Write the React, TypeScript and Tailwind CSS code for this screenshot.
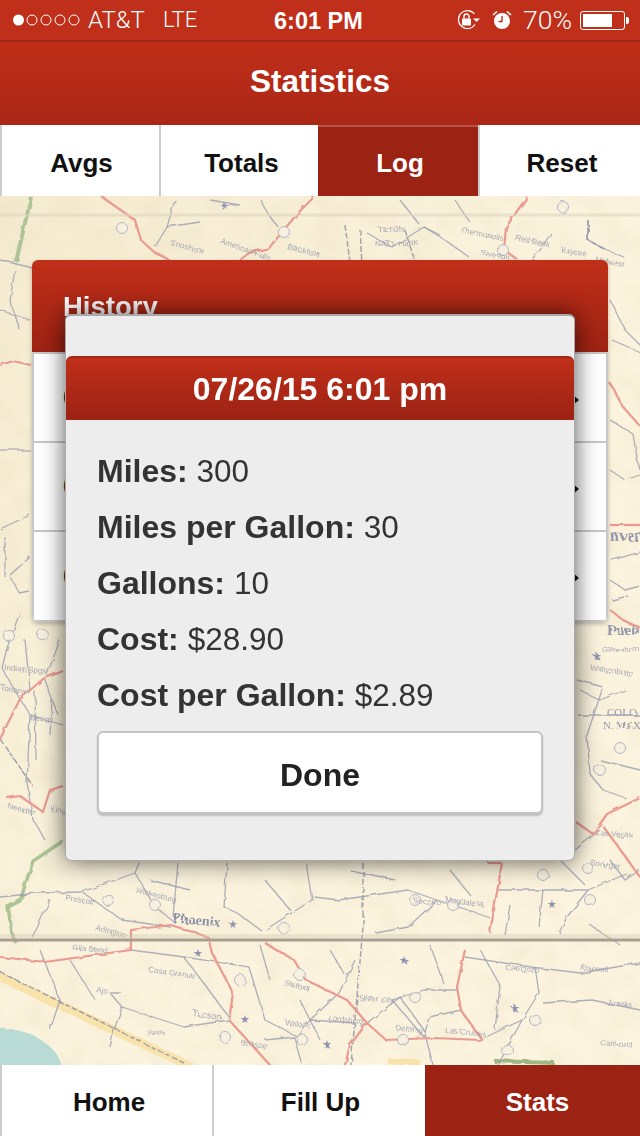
const sans = "font-['Liberation_Sans',Arial,sans-serif]";

const greyRoads = [
  "0,260 33,268", "175,200 167,227 155,247", "261,200 268,214 278,227", "367,233 392,247 424,227 445,240 469,257",
  "588,220 588,240 606,250 624,257", "551,233 540,250 531,260", "424,227 440,235", "200,222 167,227", "0,450 30,450",
  "0,529 30,515", "5,537 5,577", "10,575 30,557", "10,577 20,594 30,592", "20,612 7,648 2,668 20,699 30,715 27,782 33,820 45,840",
  "30,715 63,725", "35,690 36,760", "52,700 50,735", "603,687 587,735 590,774 603,790 626,798", "577,680 603,687",
  "610,420 633,434 637,458 640,470", "610,470 625,480 640,475", "610,580 625,590 640,586", "578,715 640,715",
  "600,760 640,770", "0,897 37,893 82,892 135,873 139,863", "82,892 122,920 171,927", "135,873 155,907 176,923",
  "178,863 173,917", "227,863 224,907 237,913 261,930", "306,863 312,900 265,930", "314,897 339,900 408,890 437,900 490,917",
  "437,900 408,927 376,933", "498,890 543,890 588,890 629,873", "543,890 539,927", "588,890 567,917 559,933",
  "465,957 531,967 580,973 640,963", "457,990 424,990 392,1000 424,1037", "461,1010 429,1017 424,1037",
  "486,1037 522,1020 539,993 535,967", "543,1003 592,1000 640,1010", "522,1020 498,1065", "122,993 110,993 122,1007 114,1030 110,1047",
  "122,1007 184,1027 229,1020", "184,957 229,1017", "249,967 265,1020 298,1037 310,1020 355,1023", "310,1020 339,993 355,960",
  "265,1040 294,1037 302,1065", "367,1023 400,997 424,1030 433,1065", "131,950 184,957 249,967", "50,900 36,930 30,940",
  "560,860 585,885", "610,860 625,880 640,870", "575,850 600,830", "15,270 10,300 20,330", "0,310 30,320", "610,300 625,330 640,345",
  "612,340 640,352", "612,560 640,552", "612,600 628,596", "580,690 600,700 625,690", "25,640 30,690", "60,640 45,680 58,715",
  "210,200 240,205", "400,200 420,225", "455,200 470,222", "260,945 270,980", "480,950 500,985 495,1030", "330,950 345,975",
  "40,950 60,1000 50,1030", "70,960 95,1000", "150,880 190,890", "265,880 290,910", "350,870 395,880", "450,870 470,895",
  "510,905 505,935", "590,925 620,945", "430,945 445,985", "300,1000 320,1040",
];
const darkRoads = ["363,863 363,927 351,1065", "0,739 33,786", "588,220 588,240 606,250", "0,972 184,1063", "360,230 362,265", "345,225 350,262", "405,230 415,262"];
const redRoads = [
  "102,197 135,220 141,240 155,253 170,260", "314,197 298,213 282,232 269,248 249,253 240,260", "527,197 506,227 504,250 518,260",
  "0,365 13,361 31,365", "610,383 623,407 640,426", "610,525 640,525", "610,610 623,620 640,628",
  "576,822 593,834 607,814 640,798", "603,826 640,877", "0,739 20,699 43,679 63,671", "7,798 20,796 43,812 50,790 63,786",
  "0,957 45,962 131,950 131,930 171,925 208,937 212,953 233,993 229,1020 270,1065", "265,943 294,960 306,980 347,1000 367,1023 386,1040 433,1038 482,1040 461,1010 457,987 465,950",
  "502,863 490,933", "488,863 502,863", "367,1023 350,1045 345,1065",
];
const labels: [string, number, number, number, number][] = [
  ["Tucson", 192, 1016, 9, 8], ["Arlington", 95, 930, 8, 15], ["Sells", 148, 1036, 8, -5],
  ["Gila Bend", 72, 950, 8, 5], ["Casa Grande", 148, 972, 8, 8], ["Safford", 284, 985, 8, 15], ["Lordsburg", 328, 1020, 8, 8],
  ["Silver City", 358, 1000, 8, 5], ["Socorro", 413, 903, 8, 5], ["Magdalena", 445, 902, 8, 8],
  ["Springer", 590, 865, 8, 8], ["Las Vegas", 596, 835, 8, 5], ["Greenhorn", 602, 652, 8, 0],
  ["Walsenburg", 590, 670, 8, 8], ["Blackfoot", 287, 249, 8, 15],
  ["Pocatello", 275, 268, 8, 15], ["Thermopolis", 460, 232, 8, 12], ["Riverton", 480, 255, 8, 10], ["Red Bank", 515, 240, 8, 12],
  ["Kaycee", 560, 252, 8, 10], ["Midwest", 595, 262, 8, 10], ["Burley", 175, 268, 8, 12], ["Rupert", 205, 272, 8, 12],
  ["Shoshone", 170, 245, 8, 15], ["American Falls", 220, 243, 8, 20], ["TETON", 378, 232, 8, 0], ["NAT'L PARK", 375, 246, 8, 0],
  ["Indian Spgs", 4, 670, 8, 5], ["Tonopah", 0, 690, 8, 10], ["Beatty", 30, 720, 8, 5], ["Needles", 7, 808, 8, 15],
  ["Kingman", 50, 812, 8, 5], ["Wickenburg", 135, 892, 8, 15], ["Prescott", 65, 900, 8, 10], ["Ajo", 96, 992, 8, 10],
  ["Benson", 240, 1045, 8, 8], ["Willcox", 285, 1025, 8, 8], ["Deming", 395, 1030, 8, 8], ["Las Cruces", 445, 1033, 8, 5],
  ["Carlsbad", 600, 1045, 8, 5], ["Artesia", 607, 1005, 8, 5], ["Roswell", 580, 970, 8, 5], ["Carrizozo", 505, 970, 8, 5],
];
const shields: [number, number][] = [
  [122, 228], [284, 232], [503, 250], [563, 207], [9, 636], [43, 635], [108, 900], [155, 905], [284, 928], [300, 975], [240, 980],
  [225, 1037], [302, 1040], [415, 900], [453, 905], [543, 875], [588, 868], [600, 770], [620, 748], [590, 900], [415, 997], [507, 1050], [535, 1020], [403, 1040],
];
const stars: [number, number][] = [[225, 210], [198, 957], [245, 1023], [233, 928], [405, 965], [327, 1048], [515, 1012], [552, 908], [597, 660]];

function MapBackdrop() {
  return (
    <svg className="absolute inset-0 h-full w-full" viewBox="0 196 640 869" preserveAspectRatio="none" aria-hidden="true">
      <defs>
        <linearGradient id="paper" x1="0" y1="0" x2="1" y2="1">
          <stop offset="0" stopColor="#f4ebd0" />
          <stop offset="0.5" stopColor="#fbf3dd" />
          <stop offset="1" stopColor="#fcf4df" />
        </linearGradient>
        <filter id="mottle" x="0" y="0" width="100%" height="100%">
          <feTurbulence type="fractalNoise" baseFrequency="0.035" numOctaves="4" seed="7" />
          <feColorMatrix values="0 0 0 0 0.72  0 0 0 0 0.62  0 0 0 0 0.42  1.4 0 0 0 -0.55" />
        </filter>
        <filter id="aged" x="-2%" y="-2%" width="104%" height="104%">
          <feTurbulence type="fractalNoise" baseFrequency="0.09" numOctaves="2" seed="3" result="n" />
          <feDisplacementMap in="SourceGraphic" in2="n" scale="3.5" result="d" />
          <feGaussianBlur in="d" stdDeviation="0.6" />
        </filter>
      </defs>
      <rect x="0" y="196" width="640" height="869" fill="url(#paper)" />
      <rect x="0" y="196" width="640" height="869" filter="url(#mottle)" opacity="0.25" />
      <g filter="url(#aged)">
        <path d="M-4 1027 C20 1030 35 1033 45 1043 C55 1050 60 1056 62 1070 L-4 1070 Z" fill="#b8dcd5" />
        <path d="M-4 975 L192 1067" stroke="#f9e3ad" strokeWidth="9" fill="none" />
        <path d="M388 1062 L420 1062" stroke="#f9e3ad" strokeWidth="6" fill="none" />
        <path d="M31 197 L16 262" stroke="#aec497" strokeWidth="4" fill="none" />
        <path d="M63 841 L33 861 L20 901 L8 907 L12 933 L16 943" stroke="#aec497" strokeWidth="3.5" fill="none" />
        <path d="M494 1061 L555 1063" stroke="#9cb884" strokeWidth="4" fill="none" />
        {greyRoads.map((p) => (
          <polyline key={p} points={p} fill="none" stroke="#9a9db0" strokeWidth="1.3" strokeLinejoin="round" opacity="0.8" />
        ))}
        {darkRoads.map((p) => (
          <polyline key={p} points={p} fill="none" stroke="#888b9e" strokeWidth="1.5" strokeDasharray="6 2" opacity="0.75" />
        ))}
        {redRoads.map((p) => (
          <polyline key={p} points={p} fill="none" stroke="#ea9a90" strokeWidth="2.2" strokeLinejoin="round" />
        ))}
        {shields.map(([x, y]) => (
          <circle key={`${x}-${y}`} cx={x} cy={y} r="5.5" fill="#f8f0de" stroke="#b3b6c4" strokeWidth="1" />
        ))}
        {stars.map(([x, y]) => (
          <text key={`${x}-${y}`} x={x} y={y} fontSize="11" fill="#9094b2" textAnchor="middle">★</text>
        ))}
        {labels.map(([t, x, y, s, r]) => (
          <text key={t} x={x} y={y} fontSize={s} fontFamily="Liberation Sans, Arial, sans-serif" fill="#989bb0" opacity="0.85" transform={`rotate(${r} ${x} ${y})`}>{t}</text>
        ))}
        <text x="172" y="922" fontSize="14" fontFamily="Liberation Serif, serif" fontWeight="700" fill="#9093a8" transform="rotate(6 172 922)">Phoenix</text>
        <text x="607" y="635" fontSize="15" fontFamily="Liberation Serif, serif" fontWeight="700" fill="#9598ac">Pueb</text>
        <text x="610" y="541" fontSize="16" fontFamily="Liberation Serif, serif" fontWeight="700" fill="#9598ac">nver</text>
        <text x="607" y="716" fontSize="11" fontFamily="Liberation Serif, serif" fill="#9598ac">COLO</text>
        <text x="603" y="729" fontSize="11" fontFamily="Liberation Serif, serif" fill="#9598ac">N. MEX</text>
      </g>
      <path d="M0 215 H640" stroke="#dcd3bf" strokeWidth="3" opacity="0.55" />
      <path d="M0 936 H640" stroke="#cfc5b0" strokeWidth="4" opacity="0.35" />
      <path d="M0 940 H640" stroke="#a89d90" strokeWidth="3" />
    </svg>
  );
}

function StatusBar() {
  return (
    <div className="relative flex h-[42px] shrink-0 items-center border-b-2 border-[#a32716] bg-[#c02f19] pl-[13px] pr-[11px] text-white">
      <svg width="68" height="14" viewBox="0 0 68 14" className="shrink-0" aria-hidden="true">
        <circle cx="5.5" cy="7" r="5.5" fill="#fff" />
        {[19, 33, 47, 61].map((x) => (
          <circle key={x} cx={x} cy="7" r="5" fill="none" stroke="#fff" strokeWidth="1" />
        ))}
      </svg>
      <span className="ml-[7px] font-['Roboto',sans-serif] text-[24px] leading-none font-light">AT&amp;T</span>
      <span className="ml-[18px] font-['Roboto',sans-serif] text-[22px] leading-none font-light">LTE</span>
      <span className={`absolute left-[274px] top-[8px] ${sans} text-[23.5px] leading-[26px] font-bold`}>6:01 PM</span>
      <div className="ml-auto flex items-center">
        <svg width="26" height="22" viewBox="0 0 26 22" aria-hidden="true">
          <path d="M19 15.5A9 9 0 1 1 18.5 5" fill="none" stroke="#fff" strokeWidth="1.2" />
          <path d="M17 9.5h7l-3.5 3.5z" fill="#fff" />
          <rect x="6" y="9.5" width="9" height="7" rx="0.8" fill="#fff" />
          <path d="M8 9.5V7.5a2.5 2.5 0 0 1 5 0v2" fill="none" stroke="#fff" strokeWidth="1.4" />
        </svg>
        <svg width="20" height="20" viewBox="0 0 20 20" className="ml-[10px]" aria-hidden="true">
          <circle cx="10" cy="11" r="8" fill="#fff" />
          <path d="M10 6v5.5H6.5" fill="none" stroke="#c02f19" strokeWidth="1.4" />
          <path d="M1 5 L5 1.5 M19 5 L15 1.5" stroke="#fff" strokeWidth="1.6" />
        </svg>
        <span className="ml-[11px] font-['Roboto',sans-serif] text-[26.5px] leading-none font-light">70%</span>
        <div className="ml-[8px] flex items-center">
          <div className="h-[19px] w-[45px] rounded-[3px] border border-white p-[2px]">
            <div className="h-full w-[29px] bg-white" />
          </div>
          <div className="ml-px h-[7px] w-[3px] rounded-r-[2px] bg-white" />
        </div>
      </div>
    </div>
  );
}

function NavButton({ label, active, className }: { label: string; active?: boolean; className: string }) {
  return (
    <div
      className={`flex items-center justify-center text-[26px] leading-none font-bold ${className} ${
        active ? "bg-[#9c2214] text-white" : "border-l-2 border-[#cccccc] bg-white text-[#111111]"
      }`}
    >
      {label}
    </div>
  );
}

function Row() {
  return (
    <div className="relative flex h-[89px] items-center border-b-2 border-[#c8c8c8] bg-white pl-[29px] text-[26px] font-bold text-[#222222] last:h-[88px] last:border-b-0">
      07/26/15 6:01 pm
      <svg width="6" height="10" viewBox="0 0 6 10" className="absolute right-[27px] top-[41px]" aria-hidden="true">
        <path d="M0 0l6 5-6 5z" fill="#111" />
      </svg>
    </div>
  );
}

const stats: [string, string][] = [
  ["Miles:", "300"],
  ["Miles per Gallon:", "30"],
  ["Gallons:", "10"],
  ["Cost:", "$28.90"],
  ["Cost per Gallon:", "$2.89"],
];

export default function App() {
  return (
    <div className={`relative flex h-[1136px] w-[640px] flex-col overflow-hidden ${sans}`}>
      <StatusBar />
      <header className="flex h-[83px] shrink-0 items-center justify-center bg-linear-to-b from-[#bf2e19] to-[#aa2716] pb-[3px] text-[31.5px] leading-none font-bold text-white">
        Statistics
      </header>
      <nav className="grid h-[71px] shrink-0 grid-cols-[159px_159px_160px_162px]">
        <NavButton label="Avgs" className="pl-[2px] pt-[4px]" />
        <NavButton label="Totals" className="pl-[4px] pt-[4px]" />
        <NavButton label="Log" active className="border-t-2 border-[#b9534a] pl-[4px] pt-[2px]" />
        <NavButton label="Reset" className="pl-[4px] pt-[4px]" />
      </nav>
      <main className="relative flex-1 overflow-hidden bg-[#f8efd9]">
        <MapBackdrop />
        <section className="relative mx-8 mt-16 overflow-hidden rounded-[6px] shadow-[0_2px_4px_rgba(0,0,0,0.25)]">
          <div className="h-[92px] bg-linear-to-b from-[#c02f19] to-[#9e2213] pl-[31px] pt-[30px] text-[27.5px] leading-[34px] font-bold text-white">
            History
          </div>
          <div className="rounded-b-[6px] border-2 border-[#c8c8c8] bg-white">
            <Row />
            <Row />
            <Row />
          </div>
        </section>
      </main>
      <nav className="grid h-[71px] shrink-0 grid-cols-[212px_213px_215px]">
        <NavButton label="Home" className="pl-[4px] pt-[2px]" />
        <NavButton label="Fill Up" className="pl-[2px] pt-[2px]" />
        <NavButton label="Stats" active className="pl-[10px] pt-[2px]" />
      </nav>

      <div className="absolute left-[65px] top-[314px] h-[547px] w-[510px] rounded-[6px] border border-t-2 border-[#a9a9a9] bg-[#ededed] pt-[40px] shadow-[0_0_24px_rgba(0,0,0,0.65)]">
        <div className="flex h-[64px] items-center justify-center rounded-t-[6px] border-t-2 border-[#a32716] bg-linear-to-b from-[#c02f19] to-[#9c2214] text-[32px] leading-none font-bold text-white">
          07/26/15 6:01 pm
        </div>
        <div className="pl-[31px] pr-[31px] pt-[23px] text-[32px] leading-[56px] text-[#333333]">
          {stats.map(([k, v]) => (
            <p key={k}>
              <b>{k}</b> <span className="text-[31.5px]">{v}</span>
            </p>
          ))}
          <button className="mt-[8px] flex h-[83px] w-full items-center justify-center rounded-[6px] border-2 border-[#c4c4c4] bg-white pt-[4px] text-[32px] font-bold text-[#222222] shadow-[0_2px_2px_rgba(0,0,0,0.2)]">
            Done
          </button>
        </div>
      </div>
    </div>
  );
}
